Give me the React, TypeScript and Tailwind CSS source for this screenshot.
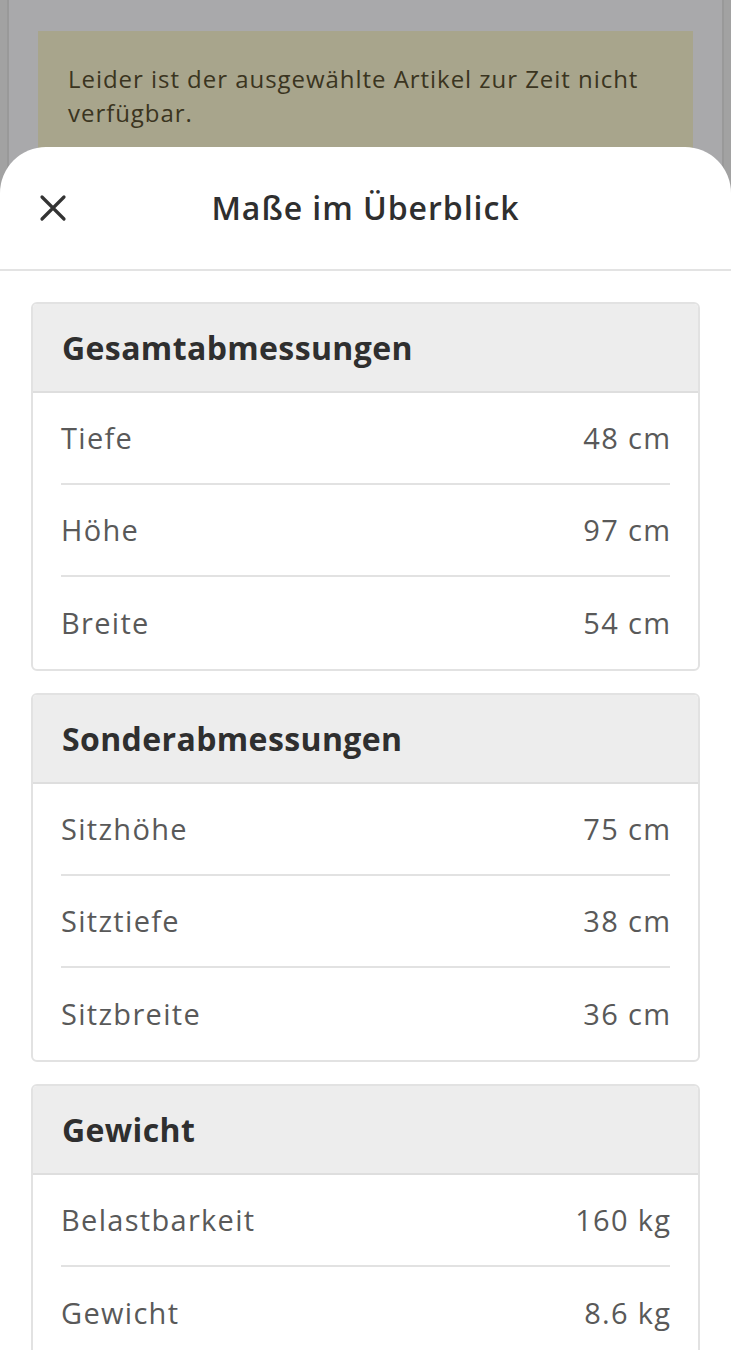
const sections = [
  {
    title: "Gesamtabmessungen",
    rows: [
      ["Tiefe", "48 cm"],
      ["Höhe", "97 cm"],
      ["Breite", "54 cm"],
    ],
  },
  {
    title: "Sonderabmessungen",
    rows: [
      ["Sitzhöhe", "75 cm"],
      ["Sitztiefe", "38 cm"],
      ["Sitzbreite", "36 cm"],
    ],
  },
  {
    title: "Gewicht",
    rows: [
      ["Belastbarkeit", "160 kg"],
      ["Gewicht", "8.6 kg"],
    ],
  },
];

function Card({ title, rows }: { title: string; rows: string[][] }) {
  return (
    <div className="shrink-0 rounded-[6px] border-2 border-[#e2e2e2] overflow-hidden">
      <div className="h-[89px] bg-[#ededed] border-b-2 border-[#dedede] flex items-center px-[29px]">
        <h2 className="text-[32px] font-bold tracking-[0.012em] text-[#2f2f2f]">{title}</h2>
      </div>
      <div className="px-[28px]">
        {rows.map(([label, value], i) => (
          <div
            key={label}
            className={
              "h-[92px] flex items-center justify-between text-[29px] tracking-[0.045em] text-[#595959] " +
              (i < rows.length - 1 ? "border-b-2 border-[#e2e2e2]" : "")
            }
          >
            <span>{label}</span>
            <span className="-mr-[0.045em]">{value}</span>
          </div>
        ))}
      </div>
    </div>
  );
}

export default function App() {
  return (
    <div
      className="relative w-[731px] h-[1350px] overflow-hidden bg-[#a2a2a2] px-[7px]"
      style={{ fontFamily: "'Open Sans', 'Noto Sans', sans-serif" }}
    >
      {/* page behind the sheet */}
      <div className="h-full bg-[#a9a9ab] border-x-2 border-[#999999] px-[29px] pt-[31px]">
        <div className="h-[170px] bg-[#a8a58c] px-[30px] pt-[31px] text-[24px] leading-[34px] tracking-[0.04em] text-[#3a3420]">
          Leider ist der ausgewählte Artikel zur Zeit nicht verfügbar.
        </div>
      </div>

      {/* bottom sheet */}
      <div className="absolute inset-x-0 top-[147px] bottom-0 bg-white rounded-t-[46px] flex flex-col">
        <div className="relative shrink-0 h-[124px] flex items-center justify-center border-b-2 border-[#e3e3e3]">
          <button className="absolute left-[38px] top-[46px] text-[#333333]">
            <svg width="30" height="30" viewBox="0 0 30 30" fill="none" stroke="currentColor" strokeWidth="3.2" strokeLinecap="round">
              <path d="M4 4 L26 26 M26 4 L4 26" />
            </svg>
          </button>
          <h1 className="text-[32px] font-semibold tracking-[0.03em] text-[#2f2f2f]">Maße im Überblick</h1>
        </div>
        <div className="px-[31px] pt-[31px] flex flex-col gap-[22px]">
          {sections.map((s) => (
            <Card key={s.title} title={s.title} rows={s.rows} />
          ))}
        </div>
      </div>
    </div>
  );
}
